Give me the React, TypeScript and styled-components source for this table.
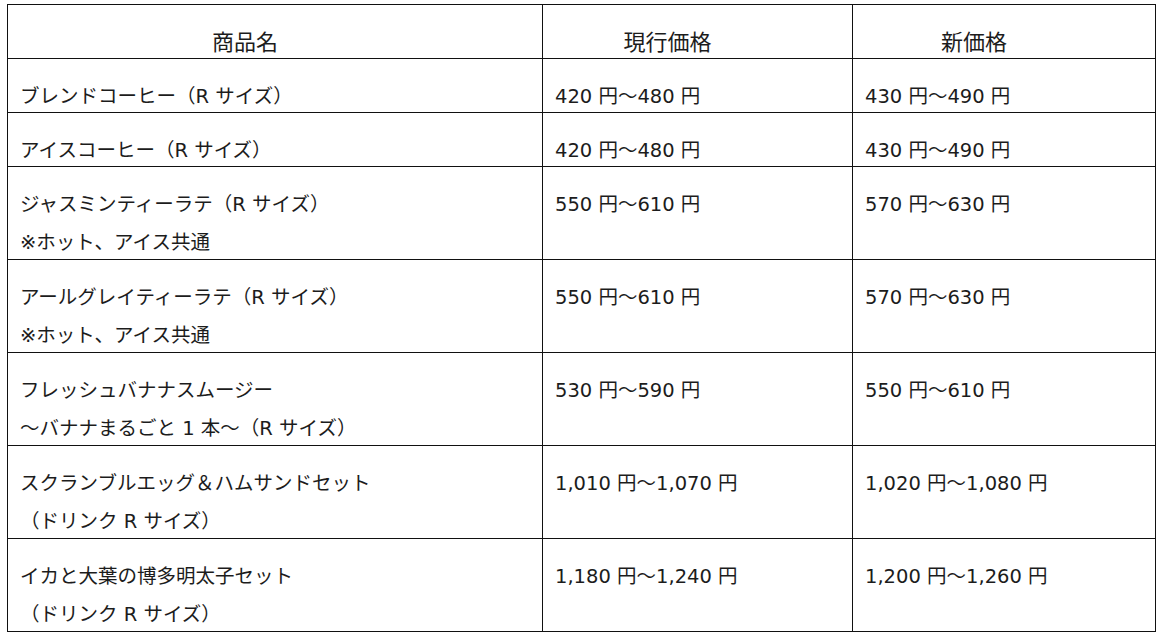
import * as React from "react";
import styled, {createGlobalStyle} from "styled-components";

const GlobalStyle = createGlobalStyle`
  html, body {
    margin: 0;
    padding: 0;
    background: #fff;
  }
`;

const Page = styled.div`
  padding: 4px 0 0 7px;
  font-family: "DejaVu Sans", "Noto Sans CJK JP", sans-serif;
  font-size: 19.5px;
  color: #1c1c1c;
`;

const Grid = styled.div<{ rows: string }>`
  display: grid;
  grid-template-columns: 535px 310px 303px;
  grid-template-rows: ${p => p.rows};
  width: 1148px;
  border-top: 1px solid #111;
  border-left: 1px solid #111;
`;

const Cell = styled.div<{ head?: boolean }>`
  box-sizing: border-box;
  border-right: 1px solid #111;
  border-bottom: 1px solid #111;
  padding: ${p => (p.head ? "19px 72px 0 12px" : "19px 0 0 12px")};
  text-align: ${p => (p.head ? "center" : "left")};
  font-size: ${p => (p.head ? "22px" : "inherit")};
  line-height: 38px;
  white-space: nowrap;
  overflow: hidden;
`;

const Line = styled.div``;

type Item = { name: string[]; now: string; next: string };

const items: Item[] = [
  { name: ["ブレンドコーヒー（R サイズ）"], now: "420 円～480 円", next: "430 円～490 円" },
  { name: ["アイスコーヒー（R サイズ）"], now: "420 円～480 円", next: "430 円～490 円" },
  { name: ["ジャスミンティーラテ（R サイズ）", "※ホット、アイス共通"], now: "550 円～610 円", next: "570 円～630 円" },
  { name: ["アールグレイティーラテ（R サイズ）", "※ホット、アイス共通"], now: "550 円～610 円", next: "570 円～630 円" },
  { name: ["フレッシュバナナスムージー", "～バナナまるごと 1 本～（R サイズ）"], now: "530 円～590 円", next: "550 円～610 円" },
  { name: ["スクランブルエッグ＆ハムサンドセット", "（ドリンク R サイズ）"], now: "1,010 円～1,070 円", next: "1,020 円～1,080 円" },
  { name: ["イカと大葉の博多明太子セット", "（ドリンク R サイズ）"], now: "1,180 円～1,240 円", next: "1,200 円～1,260 円" },
];

export default function App() {
  const rows = ["54px", ...items.map(i => (i.name.length > 1 ? "93px" : "54px"))].join(" ");
  return (
    <Page>
      <GlobalStyle />
      <Grid rows={rows}>
        <Cell head>商品名</Cell>
        <Cell head>現行価格</Cell>
        <Cell head>新価格</Cell>
        {items.map((item, i) => (
          <React.Fragment key={i}>
            <Cell>
              {item.name.map((n, j) => (
                <Line key={j}>{n}</Line>
              ))}
            </Cell>
            <Cell>{item.now}</Cell>
            <Cell>{item.next}</Cell>
          </React.Fragment>
        ))}
      </Grid>
    </Page>
  );
}
